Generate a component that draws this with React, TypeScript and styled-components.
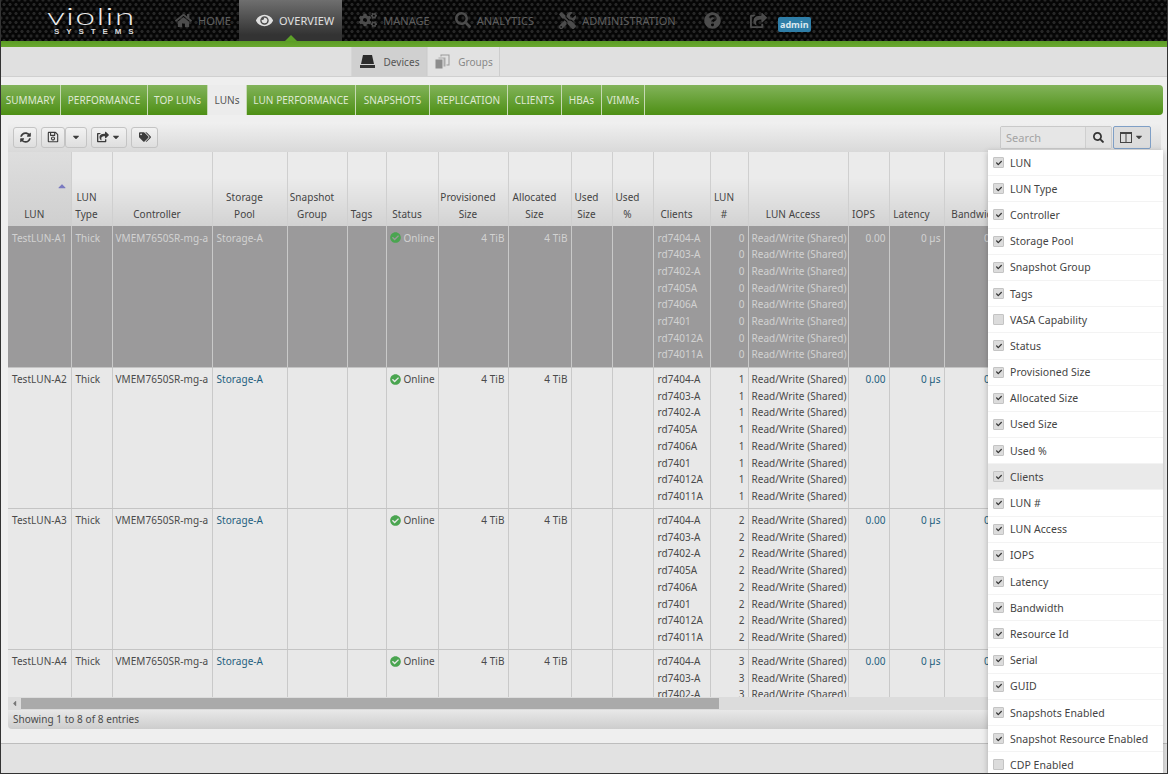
import { createGlobalStyle, styled } from "styled-components";
import {
  FaHome,
  FaEye,
  FaCogs,
  FaSearch,
  FaTools,
  FaQuestionCircle,
  FaShareSquare,
  FaSyncAlt,
  FaRegSave,
  FaTags,
  FaCheckCircle,
  FaCheck,
  FaCaretDown,
  FaCaretUp,
  FaCaretLeft,
} from "react-icons/fa";

const FONT = `"Noto Sans", "Open Sans", sans-serif`;

const NAV = [
  { label: "HOME", icon: <FaHome size={17} /> },
  { label: "OVERVIEW", icon: <FaEye size={17} />, active: true },
  { label: "MANAGE", icon: <FaCogs size={18} /> },
  { label: "ANALYTICS", icon: <FaSearch size={16} /> },
  { label: "ADMINISTRATION", icon: <FaTools size={17} /> },
];

const TABS = [
  { label: "SUMMARY", w: 60 },
  { label: "PERFORMANCE", w: 87 },
  { label: "TOP LUNs", w: 60 },
  { label: "LUNs", w: 39 },
  { label: "LUN PERFORMANCE", w: 109 },
  { label: "SNAPSHOTS", w: 74 },
  { label: "REPLICATION", w: 78 },
  { label: "CLIENTS", w: 54 },
  { label: "HBAs", w: 40 },
  { label: "VIMMs", w: 43 },
];

const COLUMNS = [
  { w: 63, label: ["LUN"], sorted: true },
  { w: 41, label: ["LUN", "Type"] },
  { w: 100, label: ["Controller"] },
  { w: 75, label: ["Storage", "Pool"] },
  { w: 60, label: ["Snapshot", "Group"] },
  { w: 39, label: ["Tags"] },
  { w: 52, label: ["Status"] },
  { w: 70, label: ["Provisioned", "Size"] },
  { w: 63, label: ["Allocated", "Size"] },
  { w: 41, label: ["Used", "Size"] },
  { w: 41, label: ["Used", "%"] },
  { w: 57, label: ["Clients"] },
  { w: 38, label: ["LUN", "#"] },
  { w: 100, label: ["LUN Access"] },
  { w: 41, label: ["IOPS"] },
  { w: 55, label: ["Latency"] },
  { w: 76, label: ["Bandwidth"] },
  { w: 140, label: ["Resource Id"] },
];

const CLIENTS = [
  "rd7404-A",
  "rd7403-A",
  "rd7402-A",
  "rd7405A",
  "rd7406A",
  "rd7401",
  "rd74012A",
  "rd74011A",
];

const MENU = [
  { label: "LUN", on: true },
  { label: "LUN Type", on: true },
  { label: "Controller", on: true },
  { label: "Storage Pool", on: true },
  { label: "Snapshot Group", on: true },
  { label: "Tags", on: true },
  { label: "VASA Capability", on: false },
  { label: "Status", on: true },
  { label: "Provisioned Size", on: true },
  { label: "Allocated Size", on: true },
  { label: "Used Size", on: true },
  { label: "Used %", on: true },
  { label: "Clients", on: true, hover: true },
  { label: "LUN #", on: true },
  { label: "LUN Access", on: true },
  { label: "IOPS", on: true },
  { label: "Latency", on: true },
  { label: "Bandwidth", on: true },
  { label: "Resource Id", on: true },
  { label: "Serial", on: true },
  { label: "GUID", on: true },
  { label: "Snapshots Enabled", on: true },
  { label: "Snapshot Resource Enabled", on: true },
  { label: "CDP Enabled", on: false },
];

const GlobalStyle = createGlobalStyle`
  html, body {
    margin: 0;
    background: #fff;
    font-family: ${FONT};
  }
`;

function DevicesIcon() {
  return (
    <svg width="17" height="15" viewBox="0 0 17 15">
      <path d="M4 1h9l2 9H2z" fill="#2b2b2b" />
      <rect x="1" y="11" width="15" height="3" fill="#333" />
    </svg>
  );
}

function GroupsIcon() {
  return (
    <svg width="16" height="16" viewBox="0 0 16 16">
      <rect x="7" y="1" width="8" height="10" fill="none" stroke="#999" />
      <rect x="4" y="3" width="8" height="10" fill="#aaa" stroke="#e0e0e0" />
      <rect x="1" y="5" width="8" height="10" fill="#8c8c8c" stroke="#e0e0e0" />
    </svg>
  );
}

function ColumnsIcon() {
  return (
    <svg width="12" height="11" viewBox="0 0 12 11">
      <rect x="0.5" y="0.5" width="11" height="10" fill="none" stroke="#444" />
      <path d="M6 .5v10M.5 1.5h11" stroke="#444" fill="none" />
    </svg>
  );
}

function LunRow({ n, selected }: { n: number; selected?: boolean }) {
  return (
    <Row $selected={selected}>
      <Cell>TestLUN-A{n + 1}</Cell>
      <Cell $pad={4}>Thick</Cell>
      <Cell $pad={3}>VMEM7650SR-mg-a</Cell>
      <Cell>
        <Link $selected={selected}>Storage-A</Link>
      </Cell>
      <Cell />
      <Cell />
      <Cell $pad={3}>
        <Status $selected={selected}>
          <FaCheckCircle size={11} />
          Online
        </Status>
      </Cell>
      <Cell $right>4 TiB</Cell>
      <Cell $right>4 TiB</Cell>
      <Cell />
      <Cell />
      <Cell>
        {CLIENTS.map((c) => (
          <div key={c}>{c}</div>
        ))}
      </Cell>
      <Cell $right>
        {CLIENTS.map((c) => (
          <div key={c}>{n}</div>
        ))}
      </Cell>
      <Cell $pad={3}>
        {CLIENTS.map((c) => (
          <div key={c}>Read/Write (Shared)</div>
        ))}
      </Cell>
      <Cell $right>
        <Link $selected={selected}>0.00</Link>
      </Cell>
      <Cell $right>
        <Link $selected={selected}>0 µs</Link>
      </Cell>
      <Cell $right>
        <Link $selected={selected}>0 KiB/s</Link>
      </Cell>
      <Cell />
    </Row>
  );
}

export default function App() {
  return (
    <Frame>
      <GlobalStyle />
      <Header>
        <Logo>
          <LogoName>violin</LogoName>
          <LogoSub>SYSTEMS</LogoSub>
        </Logo>
        {NAV.map((item) => (
          <NavItem key={item.label} $active={item.active}>
            {item.icon}
            {item.label}
          </NavItem>
        ))}
        <HeaderTools>
          <FaQuestionCircle size={17} />
          <FaShareSquare size={17} />
          <AdminBadge>admin</AdminBadge>
        </HeaderTools>
      </Header>
      <GreenBar />

      <SubNav>
        <SubTab $active>
          <DevicesIcon />
          Devices
        </SubTab>
        <SubTab>
          <GroupsIcon />
          Groups
        </SubTab>
      </SubNav>

      <TabBar>
        {TABS.map((t) => (
          <Tab key={t.label} $w={t.w} $active={t.label === "LUNs"}>
            {t.label}
          </Tab>
        ))}
      </TabBar>

      <Panel>
        <Toolbar>
          <ToolButton $w={24}>
            <FaSyncAlt size={11} />
          </ToolButton>
          <ButtonGroup>
            <ToolButton $w={24}>
              <FaRegSave size={12} />
            </ToolButton>
            <ToolButton $w={22}>
              <FaCaretDown size={10} />
            </ToolButton>
          </ButtonGroup>
          <ToolButton $w={36}>
            <FaShareSquare size={12} />
            <FaCaretDown size={10} />
          </ToolButton>
          <ToolButton $w={27}>
            <FaTags size={12} />
          </ToolButton>
          <SearchBox>
            <SearchText>Search</SearchText>
            <SearchButton>
              <FaSearch size={11} />
            </SearchButton>
          </SearchBox>
          <ColumnsButton>
            <ColumnsIcon />
            <FaCaretDown size={10} />
          </ColumnsButton>
        </Toolbar>

        <TableClip>
          <Table>
            <colgroup>
              {COLUMNS.map((c, i) => (
                <Col key={i} $w={c.w} />
              ))}
            </colgroup>
            <thead>
              <tr>
                {COLUMNS.map((c, i) => (
                  <HeadCell key={i} $sorted={c.sorted}>
                    {c.sorted && (
                      <SortMark>
                        <FaCaretUp size={12} />
                      </SortMark>
                    )}
                    {c.label.map((l) => (
                      <div key={l}>{l}</div>
                    ))}
                  </HeadCell>
                ))}
              </tr>
            </thead>
            <tbody>
              {[0, 1, 2, 3].map((n) => (
                <LunRow key={n} n={n} selected={n === 0} />
              ))}
            </tbody>
          </Table>
        </TableClip>

        <ScrollTrack>
          <ScrollArrow>
            <FaCaretLeft size={9} />
          </ScrollArrow>
          <ScrollThumb />
        </ScrollTrack>
        <TableFooter>Showing 1 to 8 of 8 entries</TableFooter>
      </Panel>

      <PageGap />
      <PageFooter />

      <ColumnMenu>
        {MENU.map((m) => (
          <MenuItem key={m.label} $hover={m.hover}>
            <Check>{m.on && <FaCheck size={6} />}</Check>
            {m.label}
          </MenuItem>
        ))}
      </ColumnMenu>
    </Frame>
  );
}

const Frame = styled.div`
  position: relative;
  box-sizing: border-box;
  width: 1168px;
  height: 774px;
  overflow: hidden;
  display: flex;
  flex-direction: column;
  background: #efefef;
  border-left: 1px solid #333;
  border-right: 1px solid #333;
  border-bottom: 1px solid #333;
  font-size: 10px;
  letter-spacing: 0.05px;
  color: #4a4a4a;
`;

const Header = styled.div`
  display: flex;
  height: 41px;
  flex: none;
  background-color: #060606;
  background-image:
    radial-gradient(circle, #262626 1.3px, transparent 1.9px),
    radial-gradient(circle, #262626 1.3px, transparent 1.9px);
  background-size: 6px 9px;
  background-position: 0 0, 3px 4.5px;
`;

const Logo = styled.div`
  flex: none;
  width: 111px;
  padding-left: 46px;
  display: flex;
  flex-direction: column;
  color: #eee;
`;

const LogoName = styled.div`
  font-family: Lato, sans-serif;
  font-weight: 300;
  font-size: 23px;
  line-height: 20px;
  margin-top: 6px;
  letter-spacing: 0.8px;
  color: #ececec;
  transform: scaleX(1.55);
  transform-origin: left center;
`;

const LogoSub = styled.div`
  font-family: "Liberation Sans", sans-serif;
  font-weight: 700;
  font-size: 8px;
  line-height: 8px;
  letter-spacing: 6.9px;
  margin: 2px 0 0 7px;
  color: #d8d8d8;
`;

const NavItem = styled.div<{ $active?: boolean }>`
  position: relative;
  display: flex;
  align-items: center;
  gap: 6px;
  padding: 0 8px 1px 17px;
  font-size: 11px;
  color: ${(p) => (p.$active ? "#e0e0e0" : "#5f5f5f")};
  background: ${(p) =>
    p.$active ? "linear-gradient(#6f6f6f, #333 85%)" : "transparent"};

  svg {
    color: ${(p) => (p.$active ? "#e0e0e0" : "#4c4c4c")};
  }

  &::after {
    content: "";
    display: ${(p) => (p.$active ? "block" : "none")};
    position: absolute;
    left: 50%;
    bottom: 0;
    margin-left: -6px;
    border: 6px solid transparent;
    border-top: 0;
    border-bottom-color: #5da028;
  }
`;

const HeaderTools = styled.div`
  display: flex;
  align-items: center;
  gap: 29px;
  margin-left: 20px;
  color: #4c4c4c;
`;

const AdminBadge = styled.span`
  width: 33px;
  height: 15px;
  margin-left: -18px;
  margin-top: 7px;
  border-radius: 2px;
  background: #2f7ea8;
  color: #dce8ee;
  font-size: 9px;
  font-weight: 700;
  line-height: 15px;
  text-align: center;
`;

const GreenBar = styled.div`
  height: 6px;
  flex: none;
  background: linear-gradient(#5b9c25, #6aa82f);
`;

const SubNav = styled.div`
  height: 30px;
  flex: none;
  display: flex;
  padding-left: 350px;
  background: #e0e0e0;
  border-bottom: 1px solid #d0d0d0;
  box-sizing: border-box;
`;

const SubTab = styled.div<{ $active?: boolean }>`
  display: flex;
  align-items: center;
  justify-content: center;
  gap: 8px;
  width: ${(p) => (p.$active ? 76 : 73)}px;
  box-sizing: border-box;
  color: ${(p) => (p.$active ? "#555" : "#888")};
  background: ${(p) => (p.$active ? "#d0d0d0" : "#e2e2e2")};
  border-right: 1px solid #cdcdcd;
  border-left: 1px solid #d6d6d6;
`;

const TabBar = styled.div`
  flex: none;
  height: 30px;
  margin: 8px 4px 0 0;
  display: flex;
  border-radius: 0 4px 4px 0;
  background: linear-gradient(#82b35a, #4d8f14);
`;

const Tab = styled.div<{ $w: number; $active?: boolean }>`
  display: flex;
  align-items: center;
  justify-content: center;
  box-sizing: border-box;
  width: ${(p) => p.$w}px;
  padding-bottom: 1px;
  font-size: 10px;
  white-space: nowrap;
  border-right: 1px solid #c6d9b4;
  color: ${(p) => (p.$active ? "#555" : "#dfe9d4")};
  background: ${(p) => (p.$active ? "#ececec" : "transparent")};
`;

const Panel = styled.div`
  flex: none;
  margin: 7px 6px 0 7px;
  display: flex;
  flex-direction: column;
`;

const Toolbar = styled.div`
  height: 30px;
  flex: none;
  box-sizing: border-box;
  display: flex;
  align-items: center;
  gap: 4px;
  padding-left: 5px;
  border-radius: 4px 4px 0 0;
  background: linear-gradient(#f0f0f0, #d9d9d9);
`;

const ButtonGroup = styled.div`
  display: flex;
`;

const ToolButton = styled.div<{ $w: number }>`
  display: flex;
  align-items: center;
  justify-content: center;
  gap: 2px;
  width: ${(p) => p.$w}px;
  height: 21px;
  box-sizing: border-box;
  color: #3c3c3c;
  background: linear-gradient(#f2f2f2, #dedede);
  border: 1px solid #c4c4c4;
  border-radius: 3px;
`;

const SearchBox = styled.div`
  display: flex;
  margin-left: auto;
  height: 23px;
  box-sizing: border-box;
  border: 1px solid #c9c9c9;
  border-radius: 2px;
`;

const SearchText = styled.div`
  width: 84px;
  padding-left: 5px;
  box-sizing: border-box;
  line-height: 21px;
  font-size: 11px;
  color: #a3a3a3;
  background: #e6e6e6;
`;

const SearchButton = styled.div`
  width: 25px;
  display: flex;
  align-items: center;
  justify-content: center;
  color: #333;
  background: #e2e2e2;
  border-left: 1px solid #cfcfcf;
`;

const ColumnsButton = styled.div`
  display: flex;
  align-items: center;
  justify-content: center;
  gap: 2px;
  width: 38px;
  height: 23px;
  margin: 0 10px 0 -3px;
  box-sizing: border-box;
  border: 1px solid #7f9fc6;
  border-radius: 2px;
  background: #dcdcdc;
  color: #444;
`;

const TableClip = styled.div`
  height: 545px;
  flex: none;
  overflow: hidden;
`;

const Table = styled.table`
  table-layout: fixed;
  width: 1152px;
  border-collapse: collapse;
  border-spacing: 0;
`;

const Col = styled.col<{ $w: number }>`
  width: ${(p) => p.$w}px;
`;

const HeadCell = styled.th<{ $sorted?: boolean }>`
  position: relative;
  height: 74px;
  padding: 0 10px 3px 0;
  box-sizing: border-box;
  vertical-align: bottom;
  text-align: center;
  font-weight: 400;
  line-height: 17px;
  color: #444;
  border-right: 1px solid #cfcfcf;
  background: ${(p) =>
    p.$sorted
      ? "linear-gradient(#dedede, #cfcfcf)"
      : "linear-gradient(#ebebeb 35%, #d2d2d2)"};
`;

const SortMark = styled.span`
  position: absolute;
  top: 28px;
  right: 3px;
  color: #7a7ac0;
`;

const Row = styled.tr<{ $selected?: boolean }>`
  height: 141px;
  background: ${(p) => (p.$selected ? "#9b9a9b" : "#e8e8e8")};
  color: ${(p) => (p.$selected ? "#d2d2d2" : "#4a4a4a")};
`;

const Cell = styled.td<{ $right?: boolean; $pad?: number }>`
  box-sizing: border-box;
  vertical-align: top;
  padding: 3.5px ${(p) => (p.$right ? 3 : 2)}px 0 ${(p) => p.$pad ?? 4}px;
  line-height: 16.7px;
  white-space: nowrap;
  overflow: hidden;
  text-align: ${(p) => (p.$right ? "right" : "left")};
  border-right: 1px solid #c9c9c9;
  border-bottom: 1px solid #c4c4c4;
`;

const Link = styled.span<{ $selected?: boolean }>`
  color: ${(p) => (p.$selected ? "#d2d2d2" : "#1f5f7f")};
`;

const Status = styled.span<{ $selected?: boolean }>`
  display: inline-flex;
  align-items: center;
  gap: 3px;

  svg {
    color: #4aa550;
  }
`;

const ScrollTrack = styled.div`
  height: 13px;
  flex: none;
  display: flex;
  align-items: center;
  padding-left: 2px;
  background: #dcdcdc;
`;

const ScrollArrow = styled.span`
  display: flex;
  width: 11px;
  color: #777;
`;

const ScrollThumb = styled.div`
  width: 698px;
  height: 11px;
  background: #aaa;
`;

const TableFooter = styled.div`
  height: 19px;
  flex: none;
  padding-left: 5px;
  line-height: 18px;
  border-radius: 0 0 4px 4px;
  background: linear-gradient(#e8e8e8, #cdcdcd);
`;

const PageGap = styled.div`
  flex: none;
  height: 14px;
  border-bottom: 1px solid #bdbdbd;
`;

const PageFooter = styled.div`
  flex: 1;
  background: #e2e2e2;
`;

const ColumnMenu = styled.div`
  position: absolute;
  top: 150px;
  right: 4px;
  bottom: 0;
  width: 175px;
  overflow: hidden;
  background: #fff;
  box-shadow: 0 2px 6px rgba(0, 0, 0, 0.25);
`;

const MenuItem = styled.div<{ $hover?: boolean }>`
  display: flex;
  align-items: center;
  gap: 6px;
  height: 26.2px;
  padding-left: 5px;
  font-size: 10.5px;
  color: #444;
  background: ${(p) => (p.$hover ? "#eaeaea" : "transparent")};
  border-bottom: 1px solid #f3f3f3;
  box-sizing: border-box;
  white-space: nowrap;
`;

const Check = styled.span`
  display: flex;
  align-items: center;
  justify-content: center;
  box-sizing: border-box;
  width: 11px;
  height: 11px;
  flex: none;
  background: #dcdcdc;
  border: 1px solid #c4c4c4;
  border-radius: 1px;
  color: #333;
`;
